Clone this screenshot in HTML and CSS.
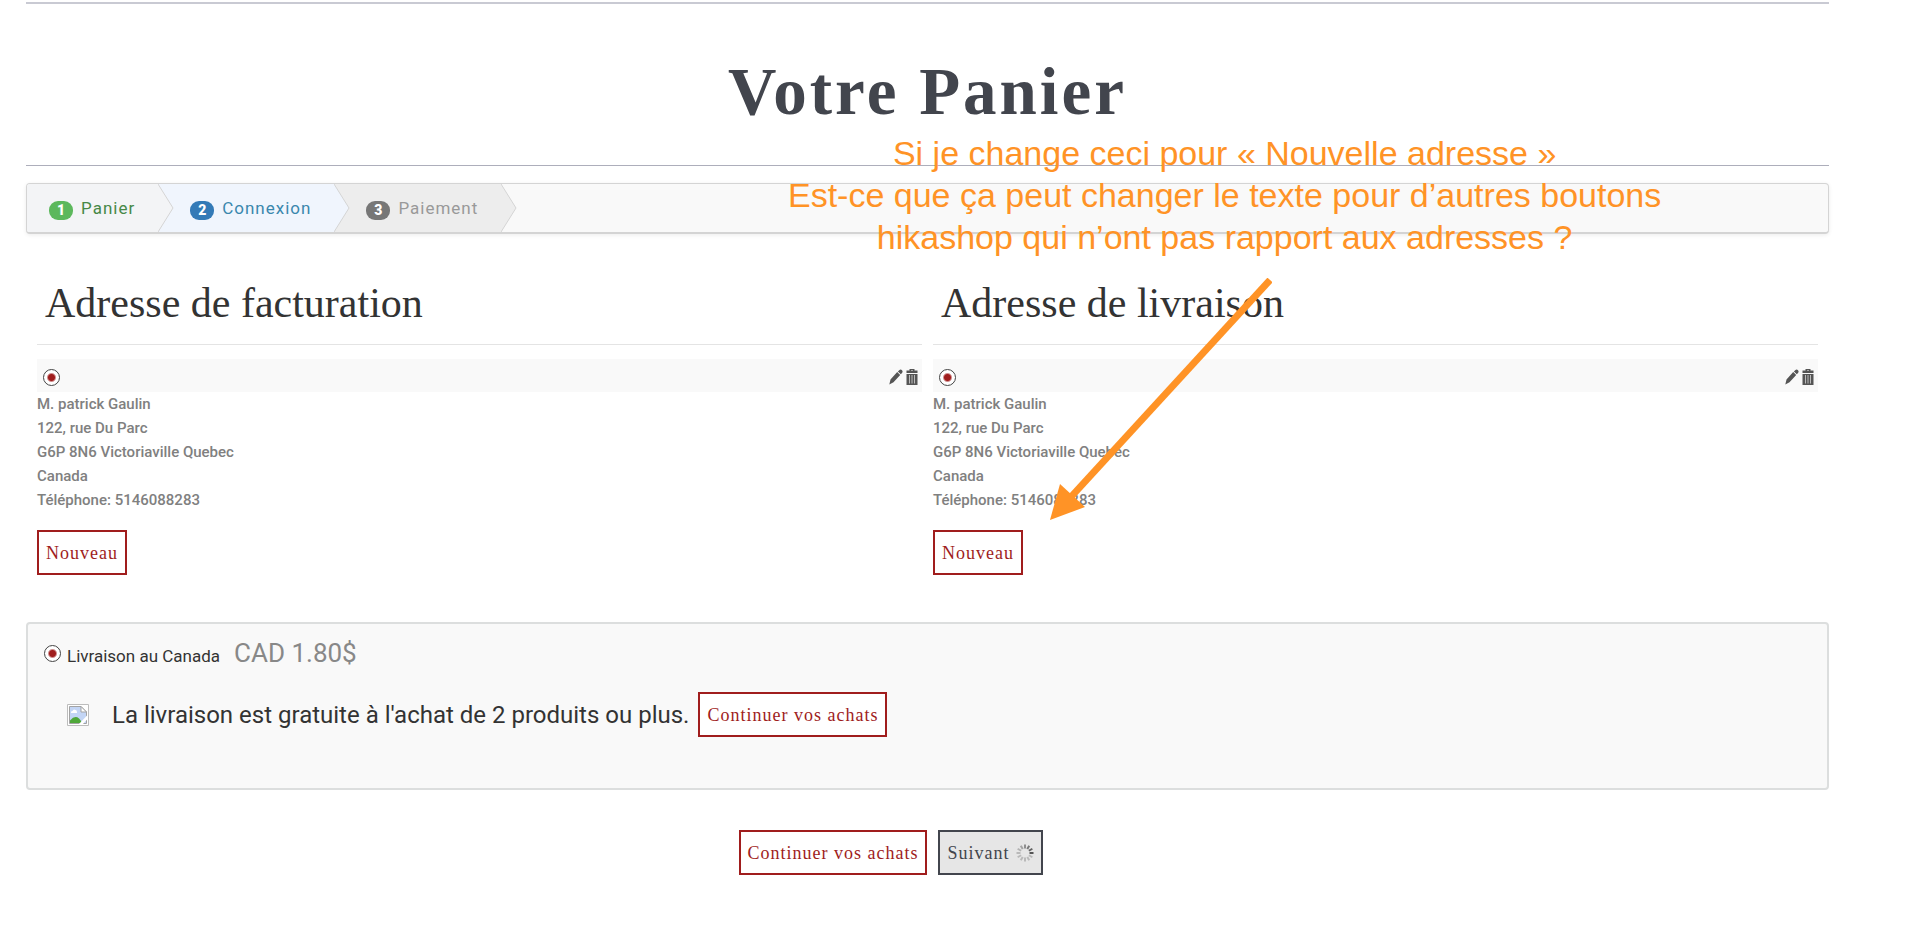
FILE: index.html
```html
<!DOCTYPE html>
<html lang="fr">
<head>
<meta charset="utf-8">
<title>Votre Panier</title>
<link rel="stylesheet" href="styles.css">
</head>
<body>
<svg class="sprites" aria-hidden="true">
  <symbol id="pencil" viewBox="0 0 14 16">
    <path d="M10.200 1.200q1.500-1.200 2.800 0 1.200 1.400 0 2.800l-1.200 1.200-2.900-2.800zM8.200 3l3 3-6.700 7.300L.300 15.400 1.500 10.600z"/>
  </symbol>
  <symbol id="trash" viewBox="0 0 12 16">
    <path fill-rule="evenodd" d="M3.500 0h5v1.500h3v2.500H.5V1.500h3zM5 1v.6h2V1zM.5 5h11v11H.5z"/>
    <path d="M3.500 6v8.500M6 6v8.500M8.500 6v8.500" stroke="#bbb"/>
  </symbol>
</svg>
<main class="page">
  <header class="title">
    <h1>Votre Panier</h1>
  </header>

  <ol class="steps">
    <li class="step done"><span class="num">1</span><span>Panier</span><svg class="chevron" viewBox="0 0 16 48"><path d="M0 0l15 24L0 48"/></svg></li>
    <li class="step current"><span class="num">2</span><span>Connexion</span><svg class="chevron" viewBox="0 0 16 48"><path d="M0 0l15 24L0 48"/></svg></li>
    <li class="step next"><span class="num">3</span><span>Paiement</span><svg class="chevron" viewBox="0 0 16 48"><path d="M0 0l15 24L0 48"/></svg></li>
  </ol>

  <div class="addresses">
    <section class="address">
      <h2>Adresse de facturation</h2>
      <div class="bar">
        <input type="radio" name="billing" aria-label="Adresse de facturation" checked>
        <a href="#edit" aria-label="Modifier"><svg class="pencil"><use href="#pencil"/></svg></a>
        <a href="#delete" aria-label="Supprimer"><svg class="trash"><use href="#trash"/></svg></a>
      </div>
      <address>M. patrick Gaulin<br>122, rue Du Parc<br>G6P 8N6 Victoriaville Quebec<br>Canada<br>Téléphone: 5146088283</address>
      <button class="btn" type="button">Nouveau</button>
    </section>
    <section class="address">
      <h2>Adresse de livraison</h2>
      <div class="bar">
        <input type="radio" name="shipping" aria-label="Adresse de livraison" checked>
        <a href="#edit" aria-label="Modifier"><svg class="pencil"><use href="#pencil"/></svg></a>
        <a href="#delete" aria-label="Supprimer"><svg class="trash"><use href="#trash"/></svg></a>
      </div>
      <address>M. patrick Gaulin<br>122, rue Du Parc<br>G6P 8N6 Victoriaville Quebec<br>Canada<br>Téléphone: 5146088283</address>
      <button class="btn" type="button">Nouveau</button>
    </section>
  </div>

  <section class="delivery">
    <div class="method">
      <input type="radio" name="method" id="canada" checked>
      <label for="canada">Livraison au Canada</label>
      <span class="price">CAD 1.80$</span>
    </div>
    <div class="promo">
      <svg class="missing" viewBox="0 0 22 22" aria-hidden="true">
        <path d="M.5.500h21v21H.5z" fill="#fff" stroke="#bdbdbd"/>
        <path d="M2.500 2.500H14l5.500 5.500v11.500h-17z" fill="#c3d5f5" stroke="#a3a3a3"/>
        <path d="M14 2.500V8h5.500z" fill="#fff" stroke="#a3a3a3"/>
        <path d="M4 9q-.5-2 1.500-2 1-2.500 3-1 1.500 0 1.500 3z" fill="#fff"/>
        <path d="M3 19v-2.500q7-8 12 2.500z" fill="#4fa83a"/>
        <path d="M11 21L21 10.500v4L15 21z" fill="#fff"/>
      </svg>
      <span>La livraison est gratuite à l'achat de 2 produits ou plus.</span>
      <button class="btn" type="button">Continuer vos achats</button>
    </div>
  </section>

  <div class="actions">
    <button class="btn" type="button">Continuer vos achats</button>
    <button class="btn dark" type="button">Suivant
      <svg class="spinner" viewBox="-9 -9 18 18" aria-hidden="true">
        <path d="M0-4.500V-8.500" opacity=".6"/>
        <path d="M0-4.500V-8.500" transform="rotate(30)" opacity=".75"/>
        <path d="M0-4.500V-8.500" transform="rotate(60)" opacity=".9"/>
        <path d="M0-4.500V-8.500" transform="rotate(90)"/>
        <path d="M0-4.500V-8.500" transform="rotate(120)" opacity=".3"/>
        <path d="M0-4.500V-8.500" transform="rotate(150)" opacity=".3"/>
        <path d="M0-4.500V-8.500" transform="rotate(180)" opacity=".3"/>
        <path d="M0-4.500V-8.500" transform="rotate(210)" opacity=".3"/>
        <path d="M0-4.500V-8.500" transform="rotate(240)" opacity=".3"/>
        <path d="M0-4.500V-8.500" transform="rotate(270)" opacity=".3"/>
        <path d="M0-4.500V-8.500" transform="rotate(300)" opacity=".35"/>
        <path d="M0-4.500V-8.500" transform="rotate(330)" opacity=".45"/>
      </svg>
    </button>
  </div>

  <aside class="note">
    <p>Si je change ceci pour « Nouvelle adresse »<br>Est-ce que ça peut changer le texte pour d’autres boutons<br>hikashop qui n’ont pas rapport aux adresses ?</p>
    <svg class="arrow" viewBox="0 0 222 242" aria-hidden="true">
      <path d="M220 2L20 220" stroke="#ff9326" stroke-width="7"/>
      <path d="M0 242l10-36 25 23z" fill="#ff9326"/>
    </svg>
  </aside>
</main>
</body>
</html>
```

FILE: styles.css
```css
* {
  box-sizing: border-box;
}

body {
  margin: 0;
  background: #fff;
  color: #333;
  font-family: Roboto, "Liberation Sans", sans-serif;
}

.sprites {
  display: none;
}

.page {
  position: relative;
  margin: 0 91px 0 26px;
  padding-top: 2px;
}

.title {
  padding: 47px 0 34px;
  border-top: 2px solid #c9cad3;
  border-bottom: 1px solid #adaebb;
  text-align: center;
}

h1 {
  margin: 0;
  color: #42454d;
  font: bold 67px/80px "Liberation Serif", serif;
  letter-spacing: 3px;
}

.steps {
  display: flex;
  height: 51px;
  margin: 17px 0 0;
  padding: 0;
  overflow: hidden;
  border: 1px solid #d4d4d4;
  border-bottom-width: 2px;
  border-radius: 4px;
  background: #f9f9f9;
  box-shadow: 0 1px 4px rgba(0, 0, 0, 0.08);
  list-style: none;
  font-size: 17px;
  letter-spacing: 1px;
}

.step {
  position: relative;
  display: flex;
  align-items: center;
  gap: 8px;
  padding: 0 23px 0 32px;
}

.step:first-child {
  padding-left: 22px;
}

.done {
  z-index: 3;
  background: #f3f4f6;
  color: #468847;
  fill: #f3f4f6;
}

.current {
  z-index: 2;
  background: #f0f5fd;
  color: #3a87ad;
  fill: #f0f5fd;
}

.next {
  z-index: 1;
  background: #ededed;
  color: #999;
  fill: #ededed;
}

.num {
  width: 24px;
  margin-top: 4px;
  border-radius: 9px;
  background: #777;
  color: #fff;
  font-size: 14px;
  font-weight: 900;
  line-height: 19px;
  letter-spacing: 0;
  text-align: center;
}

.done .num {
  background: #5cb85c;
}

.current .num {
  background: #337ab7;
}

.chevron {
  position: absolute;
  top: 0;
  left: 100%;
  width: 16px;
  height: 100%;
  stroke: #d4d4d4;
}

.addresses {
  display: grid;
  grid-template-columns: 1fr 1fr;
  gap: 11px;
  margin: 45px 11px 0;
}

h2 {
  margin: 0 0 14px;
  padding: 0 8px 17px;
  border-bottom: 1px solid #e4e4e4;
  font: 42px/48px "Liberation Serif", serif;
}

.bar {
  display: flex;
  align-items: center;
  gap: 3px;
  height: 33px;
  padding: 3px 4px 0 6px;
  background: #f9f9f9;
}

.bar input {
  margin-right: auto;
}

.bar a {
  display: flex;
  fill: #555;
}

.pencil {
  width: 14px;
  height: 16px;
}

.trash {
  width: 12px;
  height: 16px;
}

input[type="radio"] {
  appearance: none;
  width: 17px;
  height: 17px;
  margin-top: 0;
  margin-bottom: 0;
  margin-left: 0;
  border: 1px solid #444;
  border-radius: 50%;
  background: radial-gradient(circle, #a01d1d 3px, #fff 5px);
}

address {
  color: #808080;
  font-size: 15px;
  font-style: normal;
  font-weight: 500;
  line-height: 24px;
}

.btn {
  height: 45px;
  padding: 1px 7px 0;
  border: 2px solid #a01d1d;
  background: #fff;
  color: #a01d1d;
  font-family: "Liberation Serif", serif;
  font-size: 18px;
  letter-spacing: 1px;
}

.address .btn {
  margin-top: 18px;
}

.delivery {
  margin-top: 47px;
  padding: 13px 16px 51px;
  border: 2px solid #dcdede;
  border-radius: 4px;
  background: #f9f9f9;
}

.method {
  display: flex;
  align-items: baseline;
  font-size: 17px;
  line-height: 32px;
}

.method input {
  margin-right: 6px;
}

.price {
  margin-left: 14px;
  color: #888;
  font-size: 26px;
}

.promo {
  display: flex;
  align-items: center;
  margin: 20px 0 0 23px;
  font-size: 24px;
}

.missing {
  width: 22px;
  height: 22px;
  margin-right: 23px;
}

.promo .btn {
  margin-left: 9px;
}

.actions {
  display: flex;
  justify-content: center;
  gap: 11px;
  margin: 40px 74px 0 0;
}

.dark {
  display: flex;
  align-items: center;
  gap: 6px;
  border-color: #42454d;
  background: #e6e6e6;
  color: #42454d;
}

.spinner {
  width: 18px;
  height: 18px;
  stroke: #555;
  stroke-width: 2;
}

.note {
  position: absolute;
  top: 132px;
  left: 762px;
  color: #ff9326;
  font: 34px/42px "Liberation Sans", sans-serif;
  text-align: center;
}

.note p {
  margin: 0;
  white-space: nowrap;
}

.arrow {
  position: absolute;
  top: 146px;
  left: 262px;
  width: 222px;
  height: 242px;
}
```
